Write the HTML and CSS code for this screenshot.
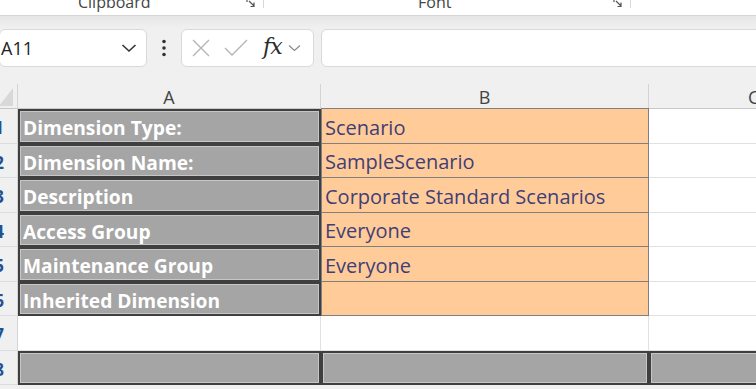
FILE: index.html
```html
<!DOCTYPE html>
<html lang="en">
<head>
    <meta charset="utf-8">
    <title>Scenario dimension</title>
    <link rel="stylesheet" href="styles.css">
</head>
<body>
<div class="ribbon">
    <div class="ribbonGroup ribbonGroup_clipboard">
        <span class="ribbonGroup__label">Clipboard</span>
        <svg class="launcher" width="11" height="9" viewBox="0 0 11 9">
            <path d="M1 0.5 H4 M1 0.5 V3 M3 2 L8 7 M8 3.5 V7.5 H4.5" fill="none" stroke="#555" stroke-width="1.2"/>
        </svg>
    </div>
    <div class="ribbonGroup ribbonGroup_font">
        <span class="ribbonGroup__label">Font</span>
        <svg class="launcher" width="11" height="9" viewBox="0 0 11 9">
            <path d="M1 0.5 H4 M1 0.5 V3 M3 2 L8 7 M8 3.5 V7.5 H4.5" fill="none" stroke="#555" stroke-width="1.2"/>
        </svg>
    </div>
</div>

<div class="formulaBar">
    <div class="nameBox">
        <span class="nameBox__value">A11</span>
        <svg width="16" height="10" viewBox="0 0 16 10">
            <path d="M1.5 2 L8 8 L14.5 2" fill="none" stroke="#333" stroke-width="1.6"/>
        </svg>
    </div>
    <svg class="dots" width="6" height="18" viewBox="0 0 6 18">
        <circle cx="3" cy="2.5" r="1.8" fill="#333"/>
        <circle cx="3" cy="9" r="1.8" fill="#333"/>
        <circle cx="3" cy="15.5" r="1.8" fill="#333"/>
    </svg>
    <div class="fxBox">
        <svg width="18" height="18" viewBox="0 0 18 18">
            <path d="M1 1 L17 17 M17 1 L1 17" stroke="#b3b3b3" stroke-width="1.3"/>
        </svg>
        <svg width="24" height="18" viewBox="0 0 24 18">
            <path d="M1 9 L8 16 L23 1" fill="none" stroke="#b3b3b3" stroke-width="1.3"/>
        </svg>
        <span class="fxBox__label">fx</span>
        <svg width="13" height="8" viewBox="0 0 13 8">
            <path d="M1 1.5 L6.5 6.5 L12 1.5" fill="none" stroke="#8a8a8a" stroke-width="1.2"/>
        </svg>
    </div>
    <div class="formulaInput"></div>
</div>

<div class="sheet">
    <div class="corner"><span class="corner__triangle"></span></div>
    <div class="colHead">A</div>
    <div class="colHead">B</div>
    <div class="colHead colHead_last">C</div>

    <div class="rowHead"><span>1</span></div>
    <div class="cell cell_check">Dimension Type:</div>
    <div class="cell cell_input">Scenario</div>
    <div class="cell cell_empty"></div>

    <div class="rowHead"><span>2</span></div>
    <div class="cell cell_check">Dimension Name:</div>
    <div class="cell cell_input">SampleScenario</div>
    <div class="cell cell_empty"></div>

    <div class="rowHead"><span>3</span></div>
    <div class="cell cell_check">Description</div>
    <div class="cell cell_input">Corporate Standard Scenarios</div>
    <div class="cell cell_empty"></div>

    <div class="rowHead"><span>4</span></div>
    <div class="cell cell_check">Access Group</div>
    <div class="cell cell_input">Everyone</div>
    <div class="cell cell_empty"></div>

    <div class="rowHead"><span>5</span></div>
    <div class="cell cell_check">Maintenance Group</div>
    <div class="cell cell_input">Everyone</div>
    <div class="cell cell_empty"></div>

    <div class="rowHead"><span>6</span></div>
    <div class="cell cell_check">Inherited Dimension</div>
    <div class="cell cell_input"></div>
    <div class="cell cell_empty"></div>

    <div class="rowHead"><span>7</span></div>
    <div class="cell cell_blank"></div>
    <div class="cell cell_blank"></div>
    <div class="cell cell_empty"></div>

    <div class="rowHead"><span>8</span></div>
    <div class="cell cell_check"></div>
    <div class="cell cell_check"></div>
    <div class="cell cell_check"></div>
</div>
</body>
</html>
```

FILE: styles.css
```css
body {
    margin: 0;
    width: 756px;
    height: 389px;
    overflow: hidden;
    font-family: 'Open Sans', sans-serif;
    background: #f0f0f0;
}

.ribbon {
    height: 15px;
    background: #fff;
    border-bottom: 1px solid #d4d4d4;
    overflow: hidden;
    position: relative;
}

.ribbonGroup {
    display: flex;
    align-items: flex-start;
    height: 15px;
}

.ribbonGroup_clipboard {
    position: absolute;
    left: 78px;
    width: 186px;
}

.ribbonGroup_font {
    position: absolute;
    left: 418px;
    width: 213px;
}

.ribbonGroup__label {
    font-size: 16px;
    line-height: 18px;
    margin-top: -7px;
    color: #444;
    flex-grow: 1;
}

.launcher {
    margin-top: -1px;
    margin-right: 6px;
}

.ribbonGroup:after {
    content: '';
    width: 1px;
    height: 8px;
    background: #d8d8d8;
}

.formulaBar {
    display: flex;
    align-items: center;
    height: 68px;
    padding-top: 12px;
    box-sizing: border-box;
    padding-bottom: 16px;
    background: linear-gradient(#e6e6e6, #f0f0f0 12px);
}

.nameBox {
    display: flex;
    align-items: center;
    justify-content: space-between;
    width: 148px;
    height: 38px;
    box-sizing: border-box;
    padding: 0 9px 0 1px;
    margin-left: -1px;
    background: #fff;
    border: 1px solid #d9d9d9;
    border-radius: 6px;
}

.nameBox__value {
    font-size: 18px;
    color: #222;
}

.dots {
    margin: 0 14px 0 14px;
}

.fxBox {
    display: flex;
    align-items: center;
    gap: 14px;
    width: 133px;
    height: 38px;
    box-sizing: border-box;
    padding-left: 10px;
    background: #fff;
    border: 1px solid #d9d9d9;
    border-radius: 6px;
}

.fxBox__label {
    font-family: 'DejaVu Serif', serif;
    font-style: italic;
    font-size: 22px;
    color: #2b2b2b;
    margin-left: 1px;
    margin-right: -8px;
    margin-top: -3px;
    letter-spacing: -1px;
}

.formulaInput {
    flex-grow: 1;
    height: 38px;
    margin-left: 7px;
    margin-right: -10px;
    box-sizing: border-box;
    background: #fff;
    border: 1px solid #d9d9d9;
    border-radius: 6px;
}

.sheet {
    display: grid;
    grid-template-columns: 18px 303px 328px 200px;
    grid-template-rows: 25px repeat(8, 34.5px);
    background: #fff;
}

.corner {
    background: #f0f0f0;
    border-right: 1px solid #d4d4d4;
    border-bottom: 1px solid #c8c8c8;
    position: relative;
    overflow: hidden;
}

.corner__triangle {
    position: absolute;
    right: 4px;
    bottom: 2px;
    width: 0;
    height: 0;
    border-left: 14px solid transparent;
    border-bottom: 18px solid #d8d8d8;
}

.colHead {
    display: flex;
    align-items: center;
    justify-content: center;
    padding-top: 2px;
    font-size: 18px;
    color: #444;
    background: #f0f0f0;
    border-right: 1px solid #d4d4d4;
    border-bottom: 1px solid #c8c8c8;
}

.colHead_last {
    justify-content: flex-start;
    padding-left: 99px;
    border-right: none;
}

.rowHead {
    display: flex;
    align-items: center;
    justify-content: flex-end;
    padding: 4px 13px 0 0;
    overflow: hidden;
    font-size: 17px;
    font-weight: 700;
    color: #24508f;
    background: #f0f0f0;
    border-right: 1px solid #d4d4d4;
    border-bottom: 1px solid #dcdcdc;
}

.cell {
    display: flex;
    align-items: center;
    box-sizing: border-box;
    white-space: nowrap;
    overflow: hidden;
    padding-top: 3px;
}

.cell_check {
    background: #a5a5a5;
    border: 2px solid #3f3f3f;
    box-shadow: inset 0 0 0 1px #c6c6c6;
    color: #fff;
    font-size: 19.2px;
    font-weight: 700;
    padding-left: 3px;
}

.cell_input {
    background: #ffcc99;
    border: 1px solid #7f7f7f;
    margin-top: -1px;
    color: #3f3f76;
    font-size: 20px;
    padding-left: 3px;
}

.cell_empty {
    border-bottom: 1px solid #e1e1e1;
}

.cell_blank {
    border-right: 1px solid #e1e1e1;
    border-bottom: 1px solid #e1e1e1;
}
```
